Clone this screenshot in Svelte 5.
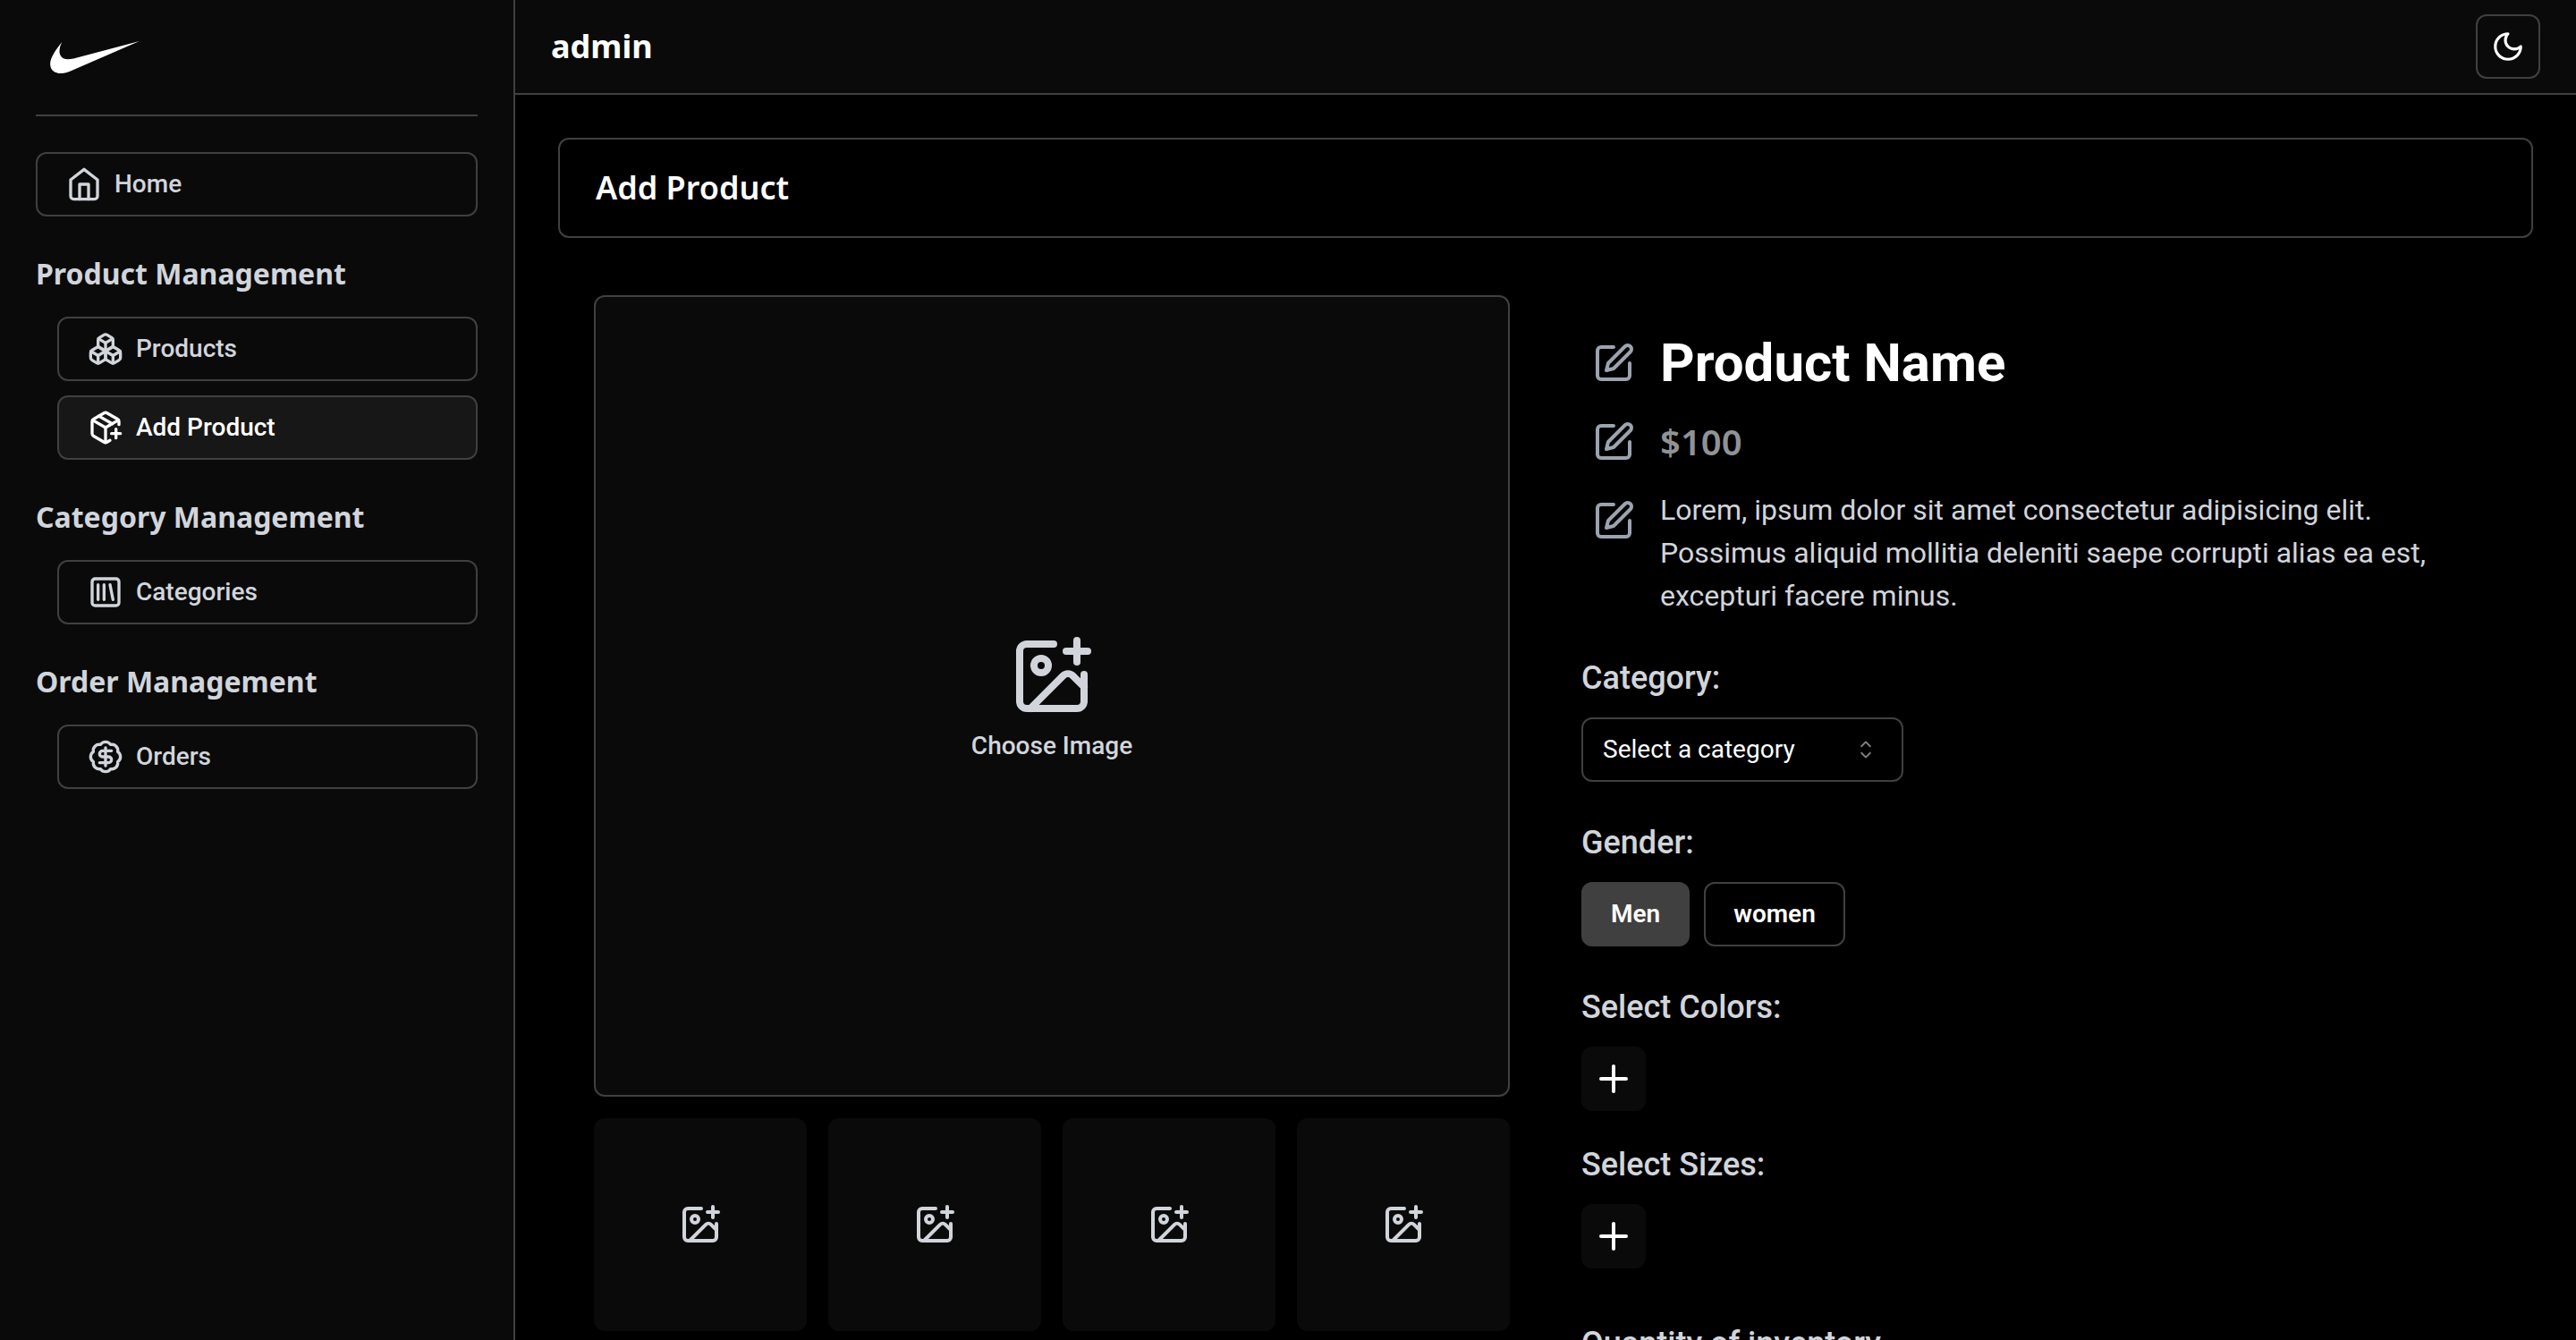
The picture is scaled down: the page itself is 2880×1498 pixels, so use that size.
<script lang="ts">
  type NavItem = { label: string; icon: string; active?: boolean };

  const groups: { title: string; items: NavItem[] }[] = [
    {
      title: 'Product Management',
      items: [
        { label: 'Products', icon: 'boxes' },
        { label: 'Add Product', icon: 'packagePlus', active: true },
      ],
    },
    { title: 'Category Management', items: [{ label: 'Categories', icon: 'library' }] },
    { title: 'Order Management', items: [{ label: 'Orders', icon: 'badge' }] },
  ];

  const icons: Record<string, string[]> = {
    home: [
      'm3 9 9-7 9 7v11a2 2 0 0 1-2 2H5a2 2 0 0 1-2-2z',
      'M9 22V12h6v10',
    ],
    boxes: [
      'M2.97 12.92A2 2 0 0 0 2 14.63v3.24a2 2 0 0 0 .97 1.71l3 1.8a2 2 0 0 0 2.06 0L12 19v-5.5l-5-3-4.03 2.42Z',
      'm7 16.5-4.74-2.85',
      'm7 16.5 5-3',
      'M7 16.5v5.17',
      'M12 13.5V19l3.97 2.38a2 2 0 0 0 2.06 0l3-1.8a2 2 0 0 0 .97-1.71v-3.24a2 2 0 0 0-.97-1.71L17 10.5l-5 3Z',
      'm17 16.5-5-3',
      'm17 16.5 4.74-2.85',
      'M17 16.5v5.17',
      'M7.97 4.42A2 2 0 0 0 7 6.13v4.37l5 3 5-3V6.13a2 2 0 0 0-.97-1.71l-3-1.8a2 2 0 0 0-2.06 0l-3 1.8Z',
      'M12 8 7.26 5.15',
      'm12 8 4.74-2.85',
      'M12 13.5V8',
    ],
    packagePlus: [
      'M16 16h6',
      'M19 13v6',
      'M21 10V8a2 2 0 0 0-1-1.73l-7-4a2 2 0 0 0-2 0l-7 4A2 2 0 0 0 3 8v8a2 2 0 0 0 1 1.73l7 4a2 2 0 0 0 2 0l2-1.14',
      'm7.5 4.27 9 5.15',
      'M3.29 7 12 12l8.71-5',
      'M12 22V12',
    ],
    library: [
      'M5 3h14a2 2 0 0 1 2 2v14a2 2 0 0 1-2 2H5a2 2 0 0 1-2-2V5a2 2 0 0 1 2-2z',
      'M7 7v10',
      'M11 7v10',
      'm15 7 2 10',
    ],
    badge: [
      'M3.85 8.62a4 4 0 0 1 4.78-4.77 4 4 0 0 1 6.74 0 4 4 0 0 1 4.78 4.78 4 4 0 0 1 0 6.74 4 4 0 0 1-4.77 4.78 4 4 0 0 1-6.75 0 4 4 0 0 1-4.78-4.77 4 4 0 0 1 0-6.76Z',
      'M16 8h-6a2 2 0 1 0 0 4h4a2 2 0 1 1 0 4H8',
      'M12 18V6',
    ],
    moon: ['M12 3a6 6 0 0 0 9 9 9 9 0 1 1-9-9Z'],
    imagePlus: [
      'M16 5h6',
      'M19 2v6',
      'M21 11.5V19a2 2 0 0 1-2 2H5a2 2 0 0 1-2-2V5a2 2 0 0 1 2-2h7.5',
      'm21 15-3.086-3.086a2 2 0 0 0-2.828 0L6 21',
      'M11 9a2 2 0 1 1-4 0 2 2 0 0 1 4 0z',
    ],
    edit: [
      'M12 3H5a2 2 0 0 0-2 2v14a2 2 0 0 0 2 2h14a2 2 0 0 0 2-2v-7',
      'M18.375 2.625a2.121 2.121 0 1 1 3 3L12 15l-4 1 1-4Z',
    ],
    plus: ['M5 12h14', 'M12 5v14'],
  };

  let gender = $state('Men');
  let quantity = $state(0);
</script>

{#snippet icon(name: string)}
  <svg class="icon" viewBox="0 0 24 24" aria-hidden="true">
    {#each icons[name] as d}<path {d} />{/each}
  </svg>
{/snippet}

<div class="shell">
  <aside class="sidebar">
    <a class="logo" href="#home" aria-label="Nike">
      <svg viewBox="0 0 302 109" aria-hidden="true">
        <path d="M302 0L79 97C62 105 49 109 37 109C14 109 0 97 0 77C0 58 16 32 40 3C32 18 29 36 34 47C41 62 57 64 79 59Z" />
      </svg>
    </a>
    <nav>
      <a class="nav-link" href="#home">{@render icon('home')}Home</a>
      {#each groups as group}
        <section class="group">
          <h2>{group.title}</h2>
          <div class="links">
            {#each group.items as item}
              <a class="nav-link" class:active={item.active} href="#{item.icon}">
                {@render icon(item.icon)}{item.label}
              </a>
            {/each}
          </div>
        </section>
      {/each}
    </nav>
  </aside>

  <div class="page">
    <header class="topbar">
      <span class="role">admin</span>
      <button class="square outlined moon" aria-label="Toggle theme">{@render icon('moon')}</button>
    </header>

    <main>
      <h1 class="title">Add Product</h1>

      <div class="columns">
        <div class="gallery">
          <button class="main-image">
            {@render icon('imagePlus')}
            Choose Image
          </button>
          <div class="thumbs">
            {#each [1, 2, 3, 4] as n}
              <button class="thumb" aria-label="Choose image {n}">{@render icon('imagePlus')}</button>
            {/each}
          </div>
        </div>

        <div class="details">
          <div class="summary">
            <div class="editable">
              <button class="square edit" aria-label="Edit name">{@render icon('edit')}</button>
              <h2 class="name">Product Name</h2>
            </div>
            <div class="editable">
              <button class="square edit" aria-label="Edit price">{@render icon('edit')}</button>
              <p class="price">$100</p>
            </div>
            <div class="editable">
              <button class="square edit" aria-label="Edit description">{@render icon('edit')}</button>
              <p class="description">
                Lorem, ipsum dolor sit amet consectetur adipisicing elit. Possimus aliquid mollitia
                deleniti saepe corrupti alias ea est, excepturi facere minus.
              </p>
            </div>
          </div>

          <div class="field">
            <label for="category">Category:</label>
            <div class="select">
              <select id="category">
                <option>Select a category</option>
              </select>
              <svg viewBox="0 0 15 15" aria-hidden="true">
                <path d="M4.93179 5.43179C4.75605 5.60753 4.75605 5.89245 4.93179 6.06819C5.10753 6.24392 5.39245 6.24392 5.56819 6.06819L7.49999 4.13638L9.43179 6.06819C9.60753 6.24392 9.89245 6.24392 10.0682 6.06819C10.2439 5.89245 10.2439 5.60753 10.0682 5.43179L7.81819 3.18179C7.73379 3.0974 7.61933 3.04999 7.49999 3.04999C7.38064 3.04999 7.26618 3.0974 7.18179 3.18179L4.93179 5.43179ZM10.0682 9.56819C10.2439 9.39245 10.2439 9.10753 10.0682 8.93179C9.89245 8.75606 9.60753 8.75606 9.43179 8.93179L7.49999 10.8636L5.56819 8.93179C5.39245 8.75606 5.10753 8.75606 4.93179 8.93179C4.75605 9.10753 4.75605 9.39245 4.93179 9.56819L7.18179 11.8182C7.26618 11.9026 7.38064 11.95 7.49999 11.95C7.61933 11.95 7.73379 11.9026 7.81819 11.8182L10.0682 9.56819Z" />
              </svg>
            </div>
          </div>

          <div class="field" role="group" aria-labelledby="gender-label">
            <span class="label" id="gender-label">Gender:</span>
            <div class="choices">
              {#each ['Men', 'women'] as option}
                <button
                  class="choice"
                  class:selected={gender === option}
                  aria-pressed={gender === option}
                  onclick={() => (gender = option)}>{option}</button>
              {/each}
            </div>
          </div>

          <div class="stack">
            <div class="field">
              <span class="label">Select Colors:</span>
              <button class="square add" aria-label="Add color">{@render icon('plus')}</button>
            </div>
            <div class="field">
              <span class="label">Select Sizes:</span>
              <button class="square add" aria-label="Add size">{@render icon('plus')}</button>
            </div>
          </div>

          <div class="field quantity">
            <label for="quantity">Quantity of inventory</label>
            <input id="quantity" type="number" min="0" bind:value={quantity} />
          </div>
        </div>
      </div>
    </main>
  </div>
</div>

<style>
  :global(body) {
    background: #000;
  }

  .shell {
    --panel: #0a0a0a;
    --line: #404040;
    --muted: #d1d5db;
    --heading: 'Noto Sans', sans-serif;
    display: flex;
    height: 100vh;
    overflow: hidden;
    background: #000;
    color: #fff;
    font: 400 28px/40px Roboto, sans-serif;
  }

  .shell :global(*) {
    box-sizing: border-box;
  }

  h1,
  h2,
  p {
    margin: 0;
  }

  a {
    color: inherit;
    text-decoration: none;
  }

  button,
  select,
  input {
    margin: 0;
    padding: 0;
    border: 0;
    border-radius: 12px;
    background: transparent;
    color: inherit;
    font: inherit;
  }

  button {
    cursor: pointer;
  }

  .icon {
    flex: none;
    width: 48px;
    height: 48px;
    fill: none;
    stroke: currentColor;
    stroke-width: 2;
    stroke-linecap: round;
    stroke-linejoin: round;
  }

  .sidebar {
    flex: none;
    width: 576px;
    padding: 0 40px;
    border-right: 2px solid var(--line);
    background: var(--panel);
    color: var(--muted);
  }

  .logo {
    display: flex;
    align-items: center;
    height: 130px;
    padding: 0 16px;
    border-bottom: 2px solid var(--line);
  }

  .logo svg {
    width: 100px;
    height: 36px;
    fill: #fff;
  }

  nav {
    display: flex;
    flex-direction: column;
    gap: 40px;
    padding-top: 40px;
  }

  .nav-link {
    display: flex;
    align-items: center;
    gap: 14px;
    height: 72px;
    padding: 0 32px;
    border: 2px solid var(--line);
    border-radius: 12px;
    font-weight: 500;
  }

  .nav-link .icon {
    width: 40px;
    height: 40px;
  }

  .nav-link.active {
    background: #171717;
    color: #fff;
  }

  .group h2 {
    margin-bottom: 24px;
    font: 700 32px/48px var(--heading);
  }

  .links {
    display: flex;
    flex-direction: column;
    gap: 16px;
    padding-left: 24px;
  }

  .page {
    display: flex;
    flex: 1;
    flex-direction: column;
    min-width: 0;
  }

  .topbar {
    display: flex;
    flex: none;
    align-items: center;
    justify-content: space-between;
    padding: 16px 40px;
    border-bottom: 2px solid var(--line);
    background: var(--panel);
  }

  .role {
    font: 700 36px/56px var(--heading);
  }

  .square {
    display: flex;
    flex: none;
    align-items: center;
    justify-content: center;
    width: 72px;
    height: 72px;
  }

  .outlined {
    border: 2px solid var(--line);
  }

  .moon .icon {
    width: 38px;
    height: 38px;
  }

  main {
    flex: 1;
    min-height: 0;
    padding: 48px;
    overflow-y: auto;
    scrollbar-width: none;
  }

  .title {
    padding: 26px 40px;
    border: 2px solid var(--line);
    border-radius: 12px;
    font: 600 36px/56px var(--heading);
  }

  .columns {
    display: grid;
    grid-template-columns: 1fr 1fr;
    gap: 80px;
    padding: 64px 40px;
  }

  .gallery {
    display: flex;
    flex-direction: column;
    gap: 24px;
    color: var(--muted);
  }

  .main-image {
    display: flex;
    flex-direction: column;
    align-items: center;
    justify-content: center;
    gap: 16px;
    height: 896px;
    border: 2px solid var(--line);
    background: var(--panel);
    font-weight: 500;
    line-height: 28px;
  }

  .main-image .icon {
    width: 96px;
    height: 96px;
  }

  .thumbs {
    display: grid;
    grid-template-columns: repeat(4, 1fr);
    gap: 24px;
  }

  .thumb {
    display: flex;
    align-items: center;
    justify-content: center;
    aspect-ratio: 1;
    background: var(--panel);
  }

  .details {
    display: flex;
    flex-direction: column;
    gap: 40px;
    padding-top: 40px;
  }

  .summary {
    display: flex;
    flex-direction: column;
    gap: 16px;
  }

  .editable {
    display: flex;
    gap: 16px;
  }

  .edit {
    color: #9ca3af;
  }

  .name {
    font: 700 60px/72px Roboto, sans-serif;
  }

  .price {
    color: #909396;
    font: 600 40px/72px var(--heading);
  }

  .description {
    color: var(--muted);
    font-size: 32px;
    line-height: 48px;
  }

  .field {
    display: flex;
    flex-direction: column;
    align-items: flex-start;
    gap: 16px;
  }

  .label,
  label {
    color: var(--muted);
    font-size: 36px;
    font-weight: 500;
    line-height: 56px;
  }

  .select {
    display: grid;
    width: 360px;
  }

  .select > * {
    grid-area: 1 / 1;
  }

  .select select {
    height: 72px;
    padding: 0 64px 0 22px;
    border: 2px solid var(--line);
    appearance: none;
  }

  .select svg {
    align-self: center;
    justify-self: end;
    width: 32px;
    height: 32px;
    margin-right: 26px;
    fill: #808080;
    pointer-events: none;
  }

  .choices {
    display: flex;
    gap: 16px;
  }

  .choice {
    height: 72px;
    padding: 0 31px;
    border: 2px solid var(--line);
    font-weight: 600;
  }

  .choice.selected {
    background: var(--line);
  }

  .stack {
    display: flex;
    flex-direction: column;
    gap: 32px;
  }

  .add {
    background: var(--panel);
  }

  .quantity {
    padding-top: 16px;
  }

  .quantity input {
    width: 360px;
    height: 72px;
    padding: 0 24px;
    border: 2px solid var(--line);
  }
</style>
